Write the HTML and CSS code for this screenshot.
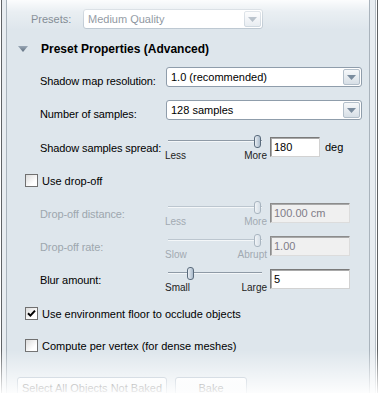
FILE: index.html
```html
<!DOCTYPE html>
<html lang="en">

<head>
  <title>Ambient Occlusion - Preset Properties</title>
  <link rel="stylesheet" href="styles.css">
</head>

<body>

  <div class="frame">
    <div class="edge-left"></div>

    <div class="panel">
      <div class="fade-top"></div>

      <div class="presets-row">
        <span class="presets-label">Presets:</span>
        <div class="combo combo-presets combo-off">
          <span class="combo-text">Medium Quality</span>
          <span class="combo-btn">
            <svg width="9" height="5" viewBox="0 0 9 5"><polygon points="0,0 9,0 4.5,5" /></svg>
          </span>
        </div>
      </div>

      <div class="section-head">
        <svg class="twisty" width="10" height="6" viewBox="0 0 10 6">
          <defs>
            <linearGradient id="tw" x1="0" y1="0" x2="0" y2="1">
              <stop offset="0" stop-color="#9aa8b6" />
              <stop offset="1" stop-color="#5d6d7e" />
            </linearGradient>
          </defs>
          <polygon points="0,0 10,0 5,6" fill="url(#tw)" />
        </svg>
        <span>Preset Properties (Advanced)</span>
      </div>

      <div class="prop prop-combo prop-res">
        <span class="prop-label">Shadow map resolution:</span>
        <div class="combo">
          <span class="combo-text">1.0 (recommended)</span>
          <span class="combo-btn">
            <svg width="9" height="5" viewBox="0 0 9 5"><polygon points="0,0 9,0 4.5,5" /></svg>
          </span>
        </div>
      </div>

      <div class="prop prop-combo prop-samples">
        <span class="prop-label">Number of samples:</span>
        <div class="combo">
          <span class="combo-text">128 samples</span>
          <span class="combo-btn">
            <svg width="9" height="5" viewBox="0 0 9 5"><polygon points="0,0 9,0 4.5,5" /></svg>
          </span>
        </div>
      </div>

      <div class="prop prop-slider prop-spread">
        <span class="prop-label">Shadow samples spread:</span>
        <div class="slider">
          <div class="slider-track"><span class="slider-thumb" style="left: 86px"></span></div>
          <div class="slider-ends"><span>Less</span><span>More</span></div>
        </div>
        <div class="field field-short">180</div>
        <span class="unit">deg</span>
      </div>

      <div class="check-row row-dropoff">
        <span class="check"></span>
        <span class="check-text">Use drop-off</span>
      </div>

      <div class="prop prop-slider prop-off prop-distance">
        <span class="prop-label">Drop-off distance:</span>
        <div class="slider">
          <div class="slider-track"><span class="slider-thumb" style="left: 86px"></span></div>
          <div class="slider-ends"><span>Less</span><span>More</span></div>
        </div>
        <div class="field">100.00 cm</div>
      </div>

      <div class="prop prop-slider prop-off prop-next">
        <span class="prop-label">Drop-off rate:</span>
        <div class="slider">
          <div class="slider-track"><span class="slider-thumb" style="left: 86px"></span></div>
          <div class="slider-ends"><span>Slow</span><span>Abrupt</span></div>
        </div>
        <div class="field">1.00</div>
      </div>

      <div class="prop prop-slider prop-next">
        <span class="prop-label">Blur amount:</span>
        <div class="slider">
          <div class="slider-track"><span class="slider-thumb" style="left: 19px"></span></div>
          <div class="slider-ends"><span>Small</span><span>Large</span></div>
        </div>
        <div class="field">5</div>
      </div>

      <div class="check-row row-floor">
        <span class="check">
          <svg width="11" height="11" viewBox="0 0 11 11"><path d="M2 5.2 L4.4 7.6 L9 2.6" /></svg>
        </span>
        <span class="check-text">Use environment floor to occlude objects</span>
      </div>

      <div class="check-row row-vertex">
        <span class="check"></span>
        <span class="check-text">Compute per vertex (for dense meshes)</span>
      </div>

      <div class="actions">
        <div class="btn btn-select">Select All Objects Not Baked</div>
        <div class="btn btn-bake">Bake</div>
      </div>
    </div>

    <div class="edge-right"></div>
    <div class="edge-rim"></div>

    <div class="fade-bottom"></div>
  </div>

</body>

</html>
```

FILE: styles.css
```css
body {
  margin: 0;
  background-color: #fff;
  color: #000;
  font-family: "Liberation Sans", Arial, sans-serif;
  font-size: 11px;
}

.frame {
  position: relative;
  display: flex;
  height: 393px;
  overflow: hidden;
}

.edge-left {
  width: 4px;
  margin-left: 1px;
  background-color: #e8edf1;
  border-left: 1px solid #606366;
  border-right: 1px solid #a9b3bc;
}

.edge-right {
  width: 5px;
  background-color: #e8edf1;
  border-left: 1px solid #a9b3bc;
  border-right: 1px solid #b7bfc6;
}

.edge-rim {
  width: 1px;
  margin-left: 1px;
  background-color: #5e6163;
}

.panel {
  position: relative;
  width: 362px;
  padding-top: 9px;
  box-sizing: border-box;
  background-color: #dee6ec;
}

.fade-top {
  position: absolute;
  left: 0;
  right: 0;
  top: 0;
  height: 30px;
  background: linear-gradient(rgba(255, 255, 255, 0.9), rgba(255, 255, 255, 0.35) 40%, rgba(255, 255, 255, 0));
  pointer-events: none;
}

.fade-bottom {
  position: absolute;
  left: 0;
  right: 0;
  top: 350px;
  bottom: 0;
  background: linear-gradient(rgba(255, 255, 255, 0), rgba(255, 255, 255, 0.92));
  pointer-events: none;
}

/* presets */

.presets-row {
  display: flex;
  align-items: center;
  height: 20px;
  padding-left: 24px;
}

.presets-label {
  width: 52px;
  color: #65707b;
}

/* combo boxes */

.combo {
  display: flex;
  width: 196px;
  height: 20px;
  box-sizing: border-box;
  border: 1px solid #8f9dab;
  border-radius: 3px;
  background-color: #fff;
}

.combo-presets {
  width: 180px;
}

.combo-text {
  flex: 1;
  padding-left: 4px;
  line-height: 18px;
}

.combo-btn {
  display: flex;
  align-items: center;
  justify-content: center;
  width: 15px;
  margin: 1px;
  border: 1px solid #b3bfca;
  border-radius: 2px;
  background: linear-gradient(#f6f8fa, #d7dfe6);
}

.combo-btn svg {
  fill: #7a8c9e;
}

.combo-off {
  border-color: #bcc7d1;
}

.combo-off .combo-text {
  color: #76818c;
}

.combo-off .combo-btn {
  border-color: #cdd6de;
  background: linear-gradient(#fafbfc, #e6ebf0);
}

.combo-off .combo-btn svg {
  fill: #a6b2be;
}

/* section header */

.section-head {
  display: flex;
  align-items: center;
  height: 16px;
  margin-top: 12px;
  padding-left: 11px;
  font-size: 12px;
  font-weight: bold;
}

.section-head span {
  margin-left: 13px;
}

/* property rows */

.prop {
  display: flex;
  align-items: flex-start;
  padding-left: 33px;
}

.prop-label {
  width: 126px;
  line-height: 20px;
  letter-spacing: -0.1px;
}

.prop-combo {
  height: 20px;
}

.prop-combo .prop-label {
  padding-top: 4px;
}

.prop-res {
  margin-top: 10px;
}

.prop-samples {
  margin-top: 13px;
}

.prop-slider {
  height: 29px;
}

.prop-slider .prop-label {
  margin-top: 4px;
}

.prop-spread {
  margin-top: 14px;
}

.prop-distance {
  margin-top: 13px;
}

.prop-next {
  margin-top: 4px;
}

/* sliders */

.slider {
  width: 102px;
  margin-left: -1px;
  margin-right: 3px;
}

.slider-track {
  position: relative;
  height: 14px;
  margin: 0 5px 0 3px;
}

.slider-track::before {
  content: "";
  position: absolute;
  left: 0;
  right: 0;
  top: 6px;
  height: 1px;
  background-color: #8e9aa6;
  border-bottom: 1px solid #f4f7f9;
}

.slider-thumb {
  position: absolute;
  top: 1px;
  width: 7px;
  height: 13px;
  box-sizing: border-box;
  border: 1px solid #5a6b7c;
  border-radius: 3px;
  background: linear-gradient(90deg, #e9eef3, #a9bacb);
}

.slider-ends {
  display: flex;
  justify-content: space-between;
  margin-top: 2px;
  font-size: 10px;
  line-height: 12px;
  color: #222;
}

/* text fields */

.field {
  width: 80px;
  height: 20px;
  margin-top: 3px;
  padding-left: 3px;
  box-sizing: border-box;
  border: 1px solid;
  border-color: #7a7a7a #d2d2d2 #d2d2d2 #7a7a7a;
  box-shadow: inset 1px 1px 0 #a9a9a9;
  background-color: #fff;
  line-height: 18px;
}

.field-short {
  width: 50px;
}

.unit {
  margin-top: 3px;
  margin-left: 5px;
  line-height: 20px;
}

/* disabled rows */

.prop-off .prop-label {
  color: #9da6ae;
}

.prop-off .slider-track::before {
  background-color: #bcc6cf;
}

.prop-off .slider-thumb {
  border-color: #a9b5c0;
  background: linear-gradient(90deg, #f1f4f7, #d6dfe7);
}

.prop-off .slider-ends {
  color: #a2aab2;
}

.prop-off .field {
  border-color: #8c8c8c #dcdcdc #dcdcdc #8c8c8c;
  background-color: #f0f0f0;
  color: #7f7c88;
}

/* check boxes */

.check-row {
  display: flex;
  align-items: center;
  height: 13px;
  padding-left: 18px;
}

.check {
  display: flex;
  align-items: center;
  justify-content: center;
  width: 13px;
  height: 13px;
  box-sizing: border-box;
  border: 1px solid #707070;
  background: linear-gradient(135deg, #dcdcdc, #fff 70%);
}

.check svg path {
  fill: none;
  stroke: #000;
  stroke-width: 2;
}

.check-text {
  margin-left: 4px;
}

.row-dropoff {
  margin-top: 11px;
}

.row-floor {
  margin-top: 12px;
}

.row-vertex {
  margin-top: 19px;
}

/* buttons */

.actions {
  display: flex;
  gap: 8px;
  margin-top: 25px;
  padding-left: 10px;
}

.btn {
  height: 22px;
  box-sizing: border-box;
  border: 1px solid #9eafbf;
  border-radius: 3px;
  background: linear-gradient(#fbfcfd, #e1e8ee);
  color: #1e1e1e;
  line-height: 20px;
  text-align: center;
}

.btn-select {
  width: 150px;
}

.btn-bake {
  width: 72px;
}
```
